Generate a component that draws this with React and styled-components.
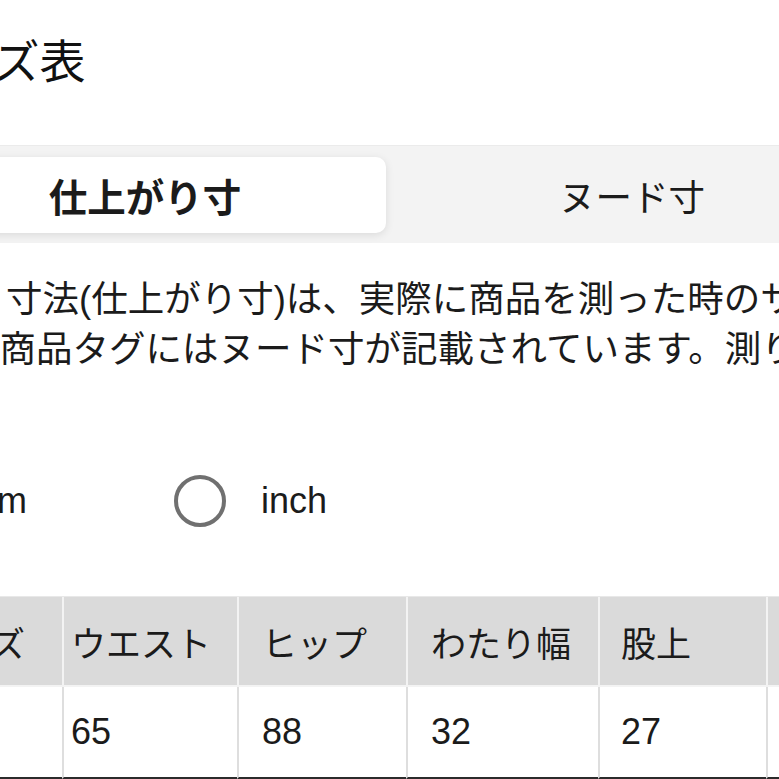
import React, { useState } from 'react';
import styled, { createGlobalStyle } from 'styled-components';

const GlobalStyle = createGlobalStyle`
  html, body {
    margin: 0;
    padding: 0;
    background: #fff;
    overflow: hidden;
  }
  body {
    font-family: "Liberation Sans", "Noto Sans CJK JP", sans-serif;
    color: #1b1b1b;
  }
`;

const Page = styled.div`
  margin-left: -110px;
  width: 1100px;
  display: flex;
  flex-direction: column;
`;

const Title = styled.h1`
  margin: 34px 0 0;
  padding-left: 13px;
  font-size: 46px;
  line-height: 56px;
  font-weight: 400;
  color: #111;
`;

const TabBar = styled.div`
  margin-top: 55px;
  height: 98px;
  box-sizing: border-box;
  padding: 11px 0 10px 14px;
  background: #f3f3f3;
  border-top: 1px solid #ebebeb;
  display: flex;
  gap: 5px;
`;

const Tab = styled.button`
  width: 482px;
  border: none;
  border-radius: 10px;
  font-family: inherit;
  font-size: ${(p) => (p.$active ? '38.5px' : '36.5px')};
  font-weight: ${(p) => (p.$active ? 700 : 400)};
  color: #1b1b1b;
  background: ${(p) => (p.$active ? '#fff' : 'transparent')};
  box-shadow: ${(p) => (p.$active ? '0 2px 8px rgba(0, 0, 0, 0.1)' : 'none')};
  display: flex;
  align-items: center;
  justify-content: center;
  padding: 0;
  cursor: pointer;
`;

const Notes = styled.div`
  margin-top: 32px;
  display: flex;
  flex-direction: column;
`;

const NoteLine = styled.div`
  padding-left: ${(p) => p.$indent}px;
  font-size: 36.5px;
  line-height: 50px;
  white-space: nowrap;
`;

const Units = styled.div`
  margin-top: 100px;
  height: 52px;
  display: flex;
  align-items: center;
  gap: 147px;
  padding-left: 2px;
`;

const UnitOption = styled.label`
  display: flex;
  align-items: center;
  gap: 35px;
  font-size: 36px;
  cursor: pointer;
`;

const Circle = styled.span`
  width: 52px;
  height: 52px;
  box-sizing: border-box;
  border-radius: 50%;
  border: 4px solid #707070;
  display: flex;
  align-items: center;
  justify-content: center;
  &::after {
    content: '';
    width: 24px;
    height: 24px;
    border-radius: 50%;
    background: #333;
    display: ${(p) => (p.$checked ? 'block' : 'none')};
  }
`;

const Table = styled.div`
  margin-top: 69px;
  display: grid;
  grid-template-columns: 172px 175px 169px 192px 168px 220px;
  border-top: 1px solid #e8e8e8;
`;

const HeadCell = styled.div`
  height: 88px;
  background: #dadada;
  border-left: ${(p) => (p.$first ? 'none' : '2px solid #f3f3f3')};
  border-bottom: 2px solid #f3f3f3;
  padding-left: ${(p) => p.$pad}px;
  display: flex;
  align-items: center;
  font-size: 35px;
  white-space: nowrap;
`;

const Cell = styled.div`
  height: 90px;
  background: #fff;
  border-left: ${(p) => (p.$first ? 'none' : '2px solid #dedede')};
  border-bottom: 2px solid #2b2b2b;
  padding-left: ${(p) => p.$pad}px;
  display: flex;
  align-items: center;
  font-size: 36px;
`;

const columns = [
  { label: 'サイズ', value: 'S', pad: 31 },
  { label: 'ウエスト', value: '65', pad: 7 },
  { label: 'ヒップ', value: '88', pad: 23 },
  { label: 'わたり幅', value: '32', pad: 23 },
  { label: '股上', value: '27', pad: 21 },
  { label: '股下', value: '70', pad: 21 },
];

export default function App() {
  const [tab, setTab] = useState('finished');
  const [unit, setUnit] = useState('cm');

  return (
    <>
      <GlobalStyle />
      <Page>
        <Title>サイズ表</Title>

        <TabBar>
          <Tab $active={tab === 'finished'} onClick={() => setTab('finished')}>
            仕上がり寸
          </Tab>
          <Tab $active={tab === 'nude'} onClick={() => setTab('nude')}>
            ヌード寸
          </Tab>
        </TabBar>

        <Notes>
          <NoteLine $indent={43}>
            ※　寸法(仕上がり寸)は、実際に商品を測った時のサイズです。
          </NoteLine>
          <NoteLine $indent={0}>
            また、商品タグにはヌード寸が記載されています。測り方は下記をご参照ください。
          </NoteLine>
        </Notes>

        <Units>
          <UnitOption onClick={() => setUnit('cm')}>
            <Circle $checked={unit === 'cm'} />
            cm
          </UnitOption>
          <UnitOption onClick={() => setUnit('inch')}>
            <Circle $checked={unit === 'inch'} />
            inch
          </UnitOption>
        </Units>

        <Table>
          {columns.map((c, i) => (
            <HeadCell key={c.label} $first={i === 0} $pad={c.pad}>
              {c.label}
            </HeadCell>
          ))}
          {columns.map((c, i) => (
            <Cell key={c.label} $first={i === 0} $pad={c.pad}>
              {c.value}
            </Cell>
          ))}
        </Table>
      </Page>
    </>
  );
}
